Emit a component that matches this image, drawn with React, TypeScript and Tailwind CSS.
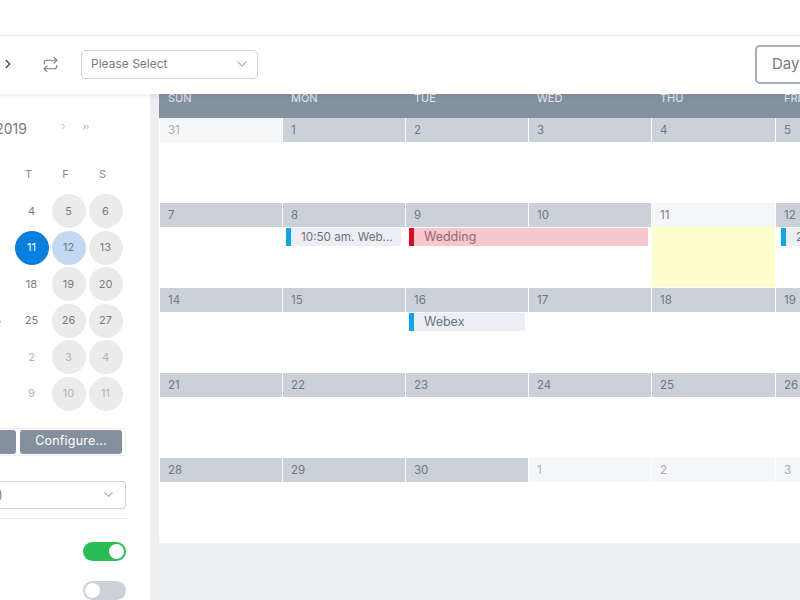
import { ChevronDown, ChevronRight, ChevronsRight, Repeat } from "lucide-react";

const FONT = "font-['Inter','Liberation_Sans',sans-serif]";

type Cell = { day: number; muted?: boolean; today?: boolean };

type CalEvent = {
  label: string;
  placement: string;
  body: string;
  bar: string;
  text: string;
};

const DAY_NAMES = ["SUN", "MON", "TUE", "WED", "THU", "FRI", "SAT"];

const WEEKS: { cells: Cell[]; events: CalEvent[]; highlight?: boolean }[] = [
  {
    cells: [{ day: 31, muted: true }, { day: 1 }, { day: 2 }, { day: 3 }, { day: 4 }, { day: 5 }, { day: 6 }],
    events: [],
  },
  {
    cells: [{ day: 7 }, { day: 8 }, { day: 9 }, { day: 10 }, { day: 11, today: true }, { day: 12 }, { day: 13 }],
    highlight: true,
    events: [
      {
        label: "10:50 am. Web...",
        placement: "col-start-2 row-start-2 w-[115px] ml-[4px]",
        body: "bg-[#eceef4]",
        bar: "bg-[#10a5e6]",
        text: "text-[11.7px] text-[#6a737d]",
      },
      {
        label: "Wedding",
        placement: "col-start-3 col-span-2 row-start-2 w-[239px] ml-[4px]",
        body: "bg-[#f6c8cd]",
        bar: "bg-[#d21224]",
        text: "text-[12.5px] text-[#96666e]",
      },
      {
        label: "2:00 pm. Meeting",
        placement: "col-start-6 row-start-2 w-[115px] ml-[6px]",
        body: "bg-[#eceef4]",
        bar: "bg-[#10a5e6]",
        text: "text-[11.7px] text-[#6a737d]",
      },
    ],
  },
  {
    cells: [{ day: 14 }, { day: 15 }, { day: 16 }, { day: 17 }, { day: 18 }, { day: 19 }, { day: 20 }],
    events: [
      {
        label: "Webex",
        placement: "col-start-3 row-start-2 w-[116px] ml-[4px]",
        body: "bg-[#eceef4]",
        bar: "bg-[#10a5e6]",
        text: "text-[12.5px] text-[#6a737d]",
      },
    ],
  },
  {
    cells: [{ day: 21 }, { day: 22 }, { day: 23 }, { day: 24 }, { day: 25 }, { day: 26 }, { day: 27 }],
    events: [],
  },
  {
    cells: [
      { day: 28 },
      { day: 29 },
      { day: 30 },
      { day: 1, muted: true },
      { day: 2, muted: true },
      { day: 3, muted: true },
      { day: 4, muted: true },
    ],
    events: [],
  },
];

const MINI_DAYS: { d: number; muted?: boolean; weekend?: boolean; state?: string }[][] = [
  [{ d: 4 }, { d: 5, weekend: true }, { d: 6, weekend: true }],
  [{ d: 11, state: "selected" }, { d: 12, state: "today" }, { d: 13, weekend: true }],
  [{ d: 18 }, { d: 19, weekend: true }, { d: 20, weekend: true }],
  [{ d: 25 }, { d: 26, weekend: true }, { d: 27, weekend: true }],
  [{ d: 2, muted: true }, { d: 3, muted: true, weekend: true }, { d: 4, muted: true, weekend: true }],
  [{ d: 9, muted: true }, { d: 10, muted: true, weekend: true }, { d: 11, muted: true, weekend: true }],
];

const LEFT_COLUMN = ["", "10", "17", "24", "", ""];

function MiniDay({ d, muted, weekend, state }: { d: number; muted?: boolean; weekend?: boolean; state?: string }) {
  let cls = muted ? "text-[#afb3b8]" : "text-[#757c84]";
  if (weekend) cls += " bg-[#ebebeb]";
  if (state === "selected") cls = "bg-[#0a7fe0] text-white";
  if (state === "today") cls = "bg-[#c3d9f3] text-[#6a7683]";
  return (
    <div className={`mx-auto flex h-[34px] w-[34px] items-center justify-center rounded-full text-[11px] ${cls}`}>{d}</div>
  );
}

function Sidebar() {
  return (
    <aside className="w-[150px] shrink-0 overflow-hidden bg-white">
      <div className="relative h-[70px]">
        <div className="flex items-center pt-[26px] text-[14px] leading-[18px] text-[#757c84]">
          <span className="w-[27px] overflow-hidden text-right whitespace-nowrap [direction:rtl]">2019</span>
          <ChevronRight className="mb-[5px] ml-[32px] text-[#9aa1a9]" size={9} strokeWidth={2} />
          <ChevronsRight className="mb-[5px] ml-[13px] text-[#8b929a]" size={10} strokeWidth={2} />
        </div>
      </div>
      <div className="ml-[-27px] grid w-[148px] grid-cols-4 text-center text-[11px] leading-[20px] text-[#858b92]">
        <span></span>
        <span>T</span>
        <span>F</span>
        <span>S</span>
      </div>
      <div className="mt-[10px] ml-[-24px] flex w-[148px] flex-col gap-[2.5px]">
        {MINI_DAYS.map((row, i) => (
          <div key={i} className="grid grid-cols-4">
            <div className="flex h-[34px] items-center justify-center text-[11px] text-[#757c84]">{LEFT_COLUMN[i]}</div>
            {row.map((cell, j) => (
              <MiniDay key={j} {...cell} />
            ))}
          </div>
        ))}
      </div>
      <div className="mt-[17px] flex h-[28px] w-[126px] gap-[4px] rounded-r-[3px] border border-l-0 border-[#eceef2] py-[1px] pr-[3px]">
        <div className="w-[16px] rounded-r-[3px] bg-[#84909d]" />
        <div className="flex w-[102px] items-center justify-center rounded-[3px] bg-[#84909d] text-[12.5px] tracking-[0.2px] text-white">
          Configure...
        </div>
      </div>
      <div className="mt-[25px] flex h-[28px] w-[126px] items-center justify-between rounded-r-[4px] border border-l-0 border-[#ccd1da] pr-[9px] text-[13px] text-[#757c84]">
        <span className="-ml-[2px]">)</span>
        <ChevronDown className="text-[#aab1ba]" size={15} strokeWidth={2} />
      </div>
      <div className="mt-[9px] h-px w-[126px] bg-[#e6e8ec]" />
      <div className="mt-[23px] flex w-[126px] flex-col items-end gap-[20px]">
        <div className="flex h-[19px] w-[43px] items-center justify-end rounded-full bg-[#2bbd55] px-[2px]">
          <div className="h-[15px] w-[15px] rounded-full bg-white" />
        </div>
        <div className="flex h-[19px] w-[43px] items-center rounded-full bg-[#ccd1d8] px-[2px]">
          <div className="h-[15px] w-[15px] rounded-full bg-white" />
        </div>
      </div>
    </aside>
  );
}

function Week({ cells, events, highlight }: { cells: Cell[]; events: CalEvent[]; highlight?: boolean }) {
  return (
    <div className="grid h-[85px] grid-cols-[123px_123px_123px_123px_124px_123px_123px] grid-rows-[24px_1fr] bg-white">
      {cells.map((c, i) => (
        <div
          key={i}
          className={`row-start-1 h-[24px] border-l border-white pl-[8px] text-[11.5px] leading-[24px] ${
            c.muted
              ? "bg-[#f5f6f8] text-[#a9adb2]"
              : c.today
                ? "bg-[#f5f6f8] text-[#757c84]"
                : "bg-[#cbd1d8] text-[#6f7780]"
          }`}
        >
          {c.day}
        </div>
      ))}
      {highlight && <div className="col-start-5 row-start-2 mb-px ml-px bg-[#ffffcd]" />}
      {events.map((e) => (
        <div key={e.label} className={`${e.placement} mt-px flex h-[18px] items-stretch ${e.body}`}>
          <div className={`w-[5px] shrink-0 ${e.bar}`} />
          <span className={`ml-[10px] truncate leading-[18px] ${e.text}`}>{e.label}</span>
        </div>
      ))}
    </div>
  );
}

export default function App() {
  return (
    <div className={`flex h-[600px] w-[800px] flex-col overflow-hidden bg-[#eceef2] ${FONT}`}>
      <div className="h-[36px] shrink-0 border-b border-[#f3f5f8] bg-white" />
      <header className="relative z-10 flex h-[58px] shrink-0 items-center bg-white pb-[2px] shadow-[0_1px_5px_rgba(60,70,90,0.14)]">
        <ChevronRight className="ml-[1px] shrink-0 text-[#4f565e]" size={14} strokeWidth={2.75} />
        <Repeat className="ml-[27px] shrink-0 text-[#747c85]" size={17} strokeWidth={1.5} />
        <div className="ml-[22px] flex h-[29px] w-[177px] shrink-0 items-center justify-between rounded-[5px] border border-[#ccd1da] pr-[7px] pl-[9px] text-[12px] text-[#757c84]">
          Please Select
          <ChevronDown className="text-[#b3b9c1]" size={16} strokeWidth={2} />
        </div>
        <div className="ml-[497px] flex h-[39px] w-[90px] shrink-0 items-center rounded-[5px] border-2 border-[#a7aeb8] pl-[15px] text-[15px] text-[#757c84]">
          Day
        </div>
      </header>
      <div className="flex min-h-0 flex-1">
        <Sidebar />
        <main className="ml-[9px] w-[862px] shrink-0">
          <div className="grid h-[24px] grid-cols-[123px_123px_123px_123px_124px_123px_123px] bg-[#8492a0]">
            {DAY_NAMES.map((name) => (
              <div key={name} className="pl-[9px] text-[11px] leading-[8px] text-[#e3e8ec]">
                {name}
              </div>
            ))}
          </div>
          {WEEKS.map((w, i) => (
            <Week key={i} cells={w.cells} events={w.events} highlight={w.highlight} />
          ))}
        </main>
      </div>
    </div>
  );
}
